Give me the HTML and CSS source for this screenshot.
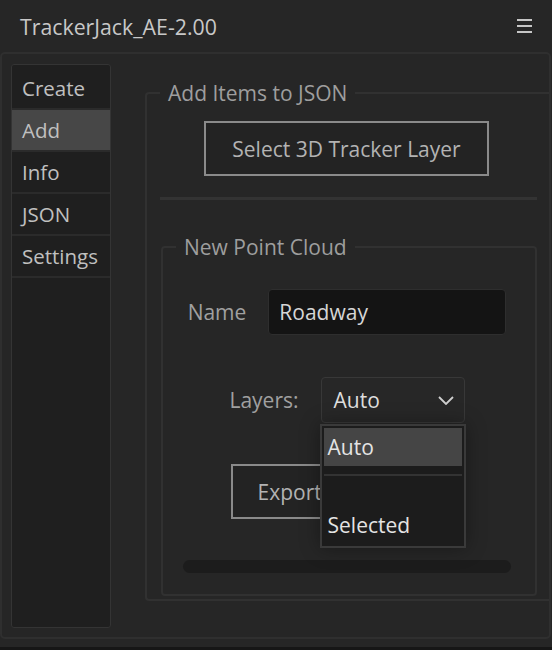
FILE: index.html
```html
<!DOCTYPE html>
<html lang="en">
<head>
<meta charset="utf-8">
<title>TrackerJack_AE-2.00</title>
<link rel="stylesheet" href="styles.css">
</head>
<body>
  <header class="titlebar">
    <span class="title">TrackerJack_AE-2.00</span>
    <svg class="menu-icon" width="15" height="14" viewBox="0 0 15 14" aria-hidden="true">
      <rect x="0" y="0" width="15" height="2" fill="#c6c6c6"/>
      <rect x="0" y="6" width="15" height="2" fill="#c6c6c6"/>
      <rect x="0" y="12" width="15" height="2" fill="#c6c6c6"/>
    </svg>
  </header>

  <main class="panel">
    <nav class="sidebar">
      <div class="nav-item">Create</div>
      <div class="nav-item active">Add</div>
      <div class="nav-item">Info</div>
      <div class="nav-item">JSON</div>
      <div class="nav-item">Settings</div>
    </nav>

    <section class="content">
      <fieldset class="group outer">
        <legend>Add Items to JSON</legend>
        <button class="btn select-layer">Select 3D Tracker Layer</button>
        <hr class="sep">
        <fieldset class="group inner">
          <legend>New Point Cloud</legend>
          <div class="field-row name-row">
            <label class="field-label">Name</label>
            <div class="text-input">Roadway</div>
          </div>
          <div class="field-row layers-row">
            <label class="field-label">Layers:</label>
            <div class="select-wrap">
              <div class="select">
                <span>Auto</span>
                <svg class="chevron" width="16" height="9" viewBox="0 0 16 9" aria-hidden="true">
                  <polyline points="1,1 8,8 15,1" fill="none" stroke="#cfcfcf" stroke-width="1.8"/>
                </svg>
              </div>
              <ul class="dropdown">
                <li class="opt active">Auto</li>
                <li class="opt-sep"></li>
                <li class="opt selected-opt">Selected</li>
              </ul>
            </div>
          </div>
          <button class="btn export">Export Point Cloud</button>
          <div class="progress"></div>
        </fieldset>
      </fieldset>
    </section>
  </main>
  <div class="footer"></div>
</body>
</html>
```
FILE: styles.css
```css
* {
  box-sizing: border-box;
}

body {
  margin: 0;
  height: 650px;
  background: #262626;
  font-family: "Open Sans", "Liberation Sans", sans-serif;
  display: flex;
  flex-direction: column;
  overflow: hidden;
}

.titlebar {
  height: 52px;
  flex: none;
  display: flex;
  align-items: center;
  justify-content: space-between;
  padding: 0 20px;
}

.title {
  font-size: 21.3px;
  color: #c8c8c8;
}

.menu-icon {
  display: block;
}

.panel {
  flex: none;
  width: 551px;
  height: 587px;
  border: 2px solid #2f2f2f;
  border-radius: 5px;
  display: flex;
  padding: 10px 0 9px 9px;
  overflow: hidden;
}

.footer {
  margin-top: auto;
  height: 3px;
  background: #161616;
  flex: none;
}

.sidebar {
  width: 100px;
  flex: none;
  border: 1px solid #343434;
  border-radius: 3px;
  background: #1f1f1f;
  padding-top: 3px;
  display: flex;
  flex-direction: column;
}

.nav-item {
  height: 42px;
  border-bottom: 2px solid #2b2b2b;
  padding-left: 10px;
  display: flex;
  align-items: center;
  font-size: 20.5px;
  color: #c0c0c0;
}

.nav-item.active {
  background: #474747;
}

.content {
  flex: 1;
  display: flex;
  flex-direction: column;
  margin-left: 34px;
  min-width: 0;
}

.group {
  margin: 0;
  min-width: 0;
  border: 2px solid #313131;
  display: flex;
  flex-direction: column;
}

.group legend {
  padding: 0 8px;
  font-size: 21px;
  line-height: 24px;
  color: #9e9e9e;
}

.group.outer {
  flex: 1;
  margin: 17px 0 27px 0;
  border-right: 0;
  border-radius: 4px 0 0 4px;
  padding: 16px 12px 0 13px;
}

.btn {
  height: 55px;
  border: 2px solid #8a8a8a;
  background: #232323;
  color: #b3b3b3;
  font-family: inherit;
  font-size: 21px;
  padding: 0;
}

.select-layer {
  width: 285px;
  align-self: center;
  margin-right: 4px;
}

.sep {
  height: 3px;
  background: #333333;
  border: 0;
  margin: 21px 0 0 0;
}

.group.inner {
  flex: none;
  margin: 35px 0 0 1px;
  border-radius: 4px;
  padding: 30px 15px 21px 11px;
  align-items: center;
}

.group.inner legend {
  margin-left: 2px;
}

.field-row {
  display: flex;
  align-items: center;
}

.name-row {
  gap: 22px;
}

.layers-row {
  gap: 22px;
  margin-top: 42px;
}

.field-label {
  font-size: 21px;
  color: #a0a0a0;
}

.text-input {
  width: 238px;
  height: 46px;
  background: #141414;
  border: 1px solid #2e2e2e;
  border-radius: 4px;
  padding-left: 10px;
  display: flex;
  align-items: center;
  color: #d6d6d6;
  font-size: 21px;
}

.select-wrap {
  position: relative;
}

.select {
  width: 144px;
  height: 46px;
  background: #272727;
  border: 1px solid #383838;
  border-radius: 4px;
  padding: 0 10px 0 12px;
  display: flex;
  align-items: center;
  justify-content: space-between;
  color: #dedede;
  font-size: 21px;
}

.chevron {
  display: block;
}

.dropdown {
  position: absolute;
  top: calc(100% + 1px);
  left: -1px;
  width: 146px;
  margin: 0;
  padding: 2px 2px 2px 2px;
  list-style: none;
  background: #1c1c1c;
  border: 2px solid #3a3a3a;
  box-shadow: 0 0 18px rgba(0, 0, 0, 0.35);
  z-index: 5;
}

.opt {
  height: 38px;
  padding-left: 4px;
  display: flex;
  align-items: center;
  color: #e4e4e4;
  font-size: 21px;
}

.opt.active {
  background: #454545;
}

.opt-sep {
  height: 2px;
  background: #333333;
  margin: 8px 0;
}

.selected-opt {
  margin-top: 30px;
}

.export {
  width: 233px;
  margin-top: 41px;
  white-space: nowrap;
  padding-left: 4px;
}

.progress {
  width: 328px;
  height: 13px;
  margin-top: 41px;
  border-radius: 7px;
  background: #1c1c1c;
}
```
